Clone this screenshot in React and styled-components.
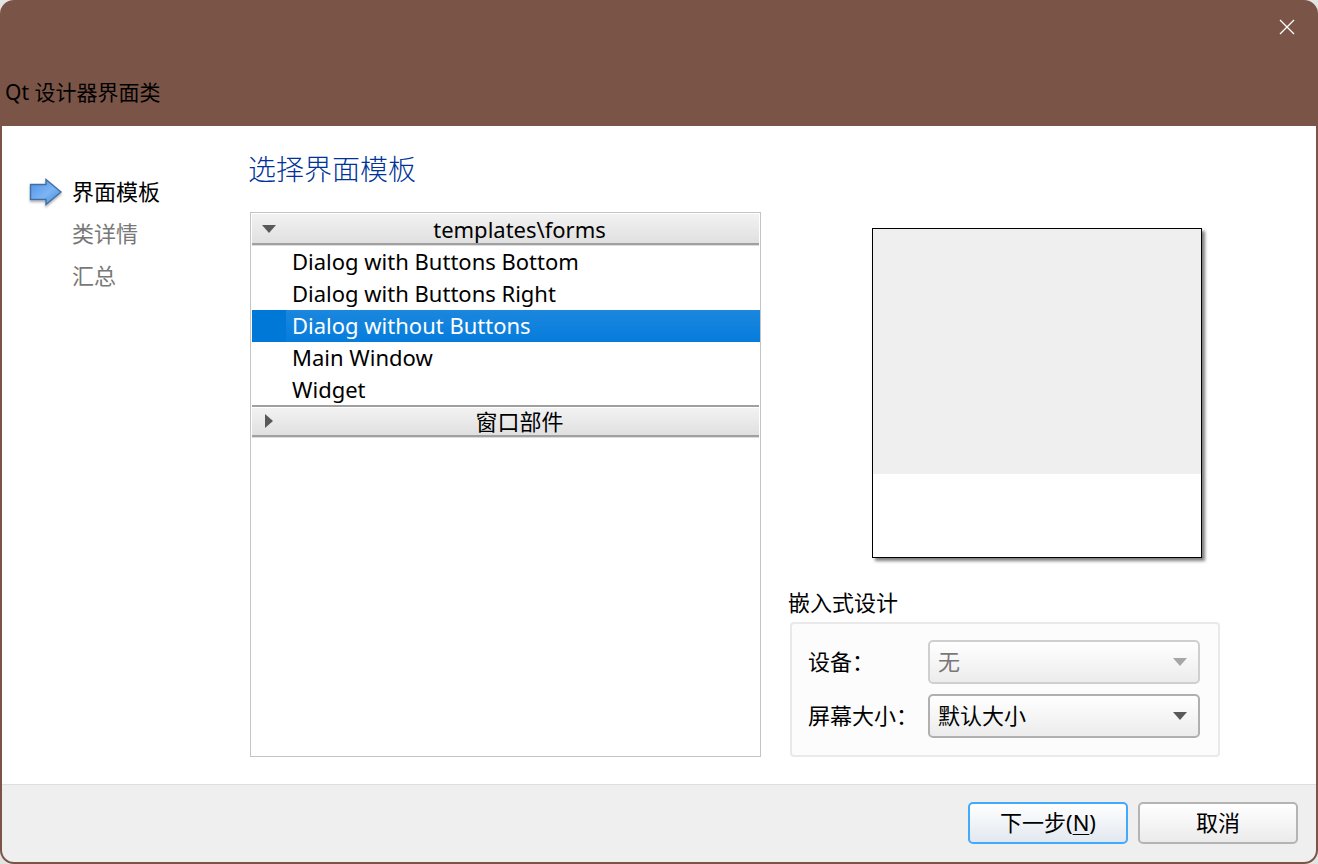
import { useState } from "react";
import styled, { createGlobalStyle } from "styled-components";

const GlobalStyle = createGlobalStyle`
  * {
    box-sizing: border-box;
  }

  body {
    margin: 0;
    background: #e4e4e4;
    color: #000;
    font-family: "Noto Sans", "Noto Sans CJK SC", sans-serif;
    font-size: 22px;
    line-height: 32px;
  }

  button,
  select {
    font: inherit;
    color: inherit;
  }
`;

//Window frame
const Window = styled.div`
  display: flex;
  flex-direction: column;
  min-height: 100vh;
  border: 2px solid #7a5547;
  border-radius: 14px;
  background: #7a5547;
  overflow: hidden;
`;

const Header = styled.header`
  padding-bottom: 18px;
`;

const TitleBar = styled.div`
  display: flex;
  justify-content: flex-end;
  height: 50px;
  margin-bottom: 24px;
`;

const CloseButton = styled.button`
  display: flex;
  align-items: center;
  justify-content: center;
  width: 58px;
  padding: 0;
  border: none;
  background: none;
`;

const WindowTitle = styled.h1`
  margin: 0;
  padding-left: 3px;
  font-size: 21px;
  font-weight: 400;
  line-height: 32px;
`;

const Body = styled.div`
  flex: 1;
  display: flex;
  background: #fff;
`;

//Steps
const Steps = styled.ol`
  width: 248px;
  margin: 0;
  padding: 45px 0 0 26px;
  list-style: none;
  font-family: "Noto Sans CJK SC", sans-serif;
`;

const Step = styled.li`
  display: grid;
  grid-template-columns: 36px 1fr;
  align-items: center;
  column-gap: 8px;
  height: 42px;
  color: ${(props) => (props.$current ? "#000" : "#787878")};
`;

const StepName = styled.span`
  grid-column: 2;
  padding-bottom: 4px;
`;

//Page
const Page = styled.main`
  flex: 1;
  display: flex;
  flex-direction: column;
  padding: 22px 18px 27px 0;
`;

const PageTitle = styled.h2`
  margin: 0 0 24px -2px;
  color: #003399;
  font-family: "Noto Sans CJK SC", sans-serif;
  font-size: 28px;
  font-weight: 300;
  line-height: 40px;
`;

const Columns = styled.div`
  flex: 1;
  display: grid;
  grid-template-columns: 511fr 522fr;
  column-gap: 15px;
`;

const Tree = styled.div`
  border: 1px solid #c4c4c4;
  padding-left: 1px;
`;

const GroupHeader = styled.button`
  display: grid;
  grid-template-columns: 34px 1fr;
  align-items: center;
  width: calc(100% - 1px);
  height: 32px;
  margin-bottom: 1px;
  padding: 1px 6px 0 0;
  border: none;
  border-bottom: 2px solid #a0a0a0;
  background: linear-gradient(#fff 1px, #f2f2f2 1px, #e0e0e0);
  box-shadow: 0 1px #dcdcdc;
  line-height: 28px;

  &:not(:first-child) {
    margin-top: -1px;
    padding-top: 0;
    border-top: 2px solid #a0a0a0;
  }
`;

const Expander = styled.svg`
  justify-self: center;
  transform: ${(props) => (props.$open ? "none" : "rotate(-90deg)")};
`;

const Item = styled.button`
  display: block;
  width: 100%;
  height: 32px;
  padding: 0 0 2px 40px;
  border: none;
  background: ${(props) =>
    props.$selected
      ? "linear-gradient(to right, #0078d7 34px, transparent 34px), linear-gradient(#1b87de, #067cdc)"
      : "#fff"};
  color: ${(props) => (props.$selected ? "#fff" : "#000")};
  line-height: 30px;
  text-align: left;
`;

const Side = styled.div`
  display: flex;
  flex-direction: column;
  justify-content: space-between;
  padding-top: 16px;
`;

const Preview = styled.div`
  align-self: center;
  width: 330px;
  height: 330px;
  border: 1px solid #000;
  background: linear-gradient(#efefef 245px, #fff 245px);
  box-shadow: 3px 3px 3px rgba(0, 0, 0, 0.5);
`;

const Embedded = styled.section`
  width: 444px;
  padding-left: 12px;
  font-family: "Noto Sans CJK SC", sans-serif;
`;

const EmbeddedTitle = styled.h3`
  margin: 0 0 5px;
  font-size: 22px;
  font-weight: 400;
  line-height: 32px;
`;

const Frame = styled.div`
  display: grid;
  row-gap: 10px;
  margin-left: 2px;
  padding: 16px 18px 17px 16px;
  border: 2px solid #e9e9e9;
  border-radius: 4px;
  background: #fcfcfc;
`;

const Field = styled.div`
  display: grid;
  grid-template-columns: 120px 1fr;
  align-items: center;
`;

const Label = styled.label`
  padding-bottom: 4px;
`;

const SelectBox = styled.div`
  display: grid;
  align-items: center;

  & > * {
    grid-area: 1 / 1;
  }
`;

const Select = styled.select`
  appearance: none;
  width: 100%;
  height: 44px;
  padding: 0 40px 4px 8px;
  border: 2px solid #b0b0b0;
  border-radius: 5px;
  background: linear-gradient(#fff, #ececec);

  &:disabled {
    border-color: #cfcfcf;
    color: #787878;
    opacity: 1;
  }
`;

const SelectArrow = styled.svg`
  justify-self: end;
  margin-right: 12px;
  pointer-events: none;
`;

//Footer
const Footer = styled.footer`
  display: flex;
  justify-content: flex-end;
  gap: 10px;
  padding: 17px 18px 18px;
  border-top: 1px solid #dfdfdf;
  background: #efefef;
`;

const Button = styled.button`
  width: 160px;
  height: 42px;
  padding: 0 0 2px;
  border: 2px solid ${(props) => (props.$primary ? "#42a9fb" : "#b4b4b4")};
  border-radius: 5px;
  background: linear-gradient(#fff, ${(props) => (props.$primary ? "#e2e8f0" : "#ebebeb")});
  line-height: 36px;
`;

const Mnemonic = styled.span`
  text-decoration: underline;
  text-decoration-thickness: 1px;
  text-underline-offset: 3px;
`;
//End styled components

const steps = ["界面模板", "类详情", "汇总"];

const forms = [
  "Dialog with Buttons Bottom",
  "Dialog with Buttons Right",
  "Dialog without Buttons",
  "Main Window",
  "Widget",
];

const StepArrow = () => (
  <svg width="36" height="34" viewBox="0 0 36 34" aria-hidden="true">
    <defs>
      <linearGradient id="arrowFill" x1="0" y1="0" x2="1" y2="1">
        <stop offset="0" stopColor="#4a90e6" />
        <stop offset="0.55" stopColor="#7db5f5" />
        <stop offset="1" stopColor="#3f83d8" />
      </linearGradient>
      <filter id="arrowShadow" x="-20%" y="-20%" width="140%" height="150%">
        <feDropShadow dx="0" dy="2" stdDeviation="1" floodOpacity="0.3" />
      </filter>
    </defs>
    <path
      d="M2.5 9.5H18V4.5L33 17 18 29.5V24.5H2.5Z"
      fill="url(#arrowFill)"
      stroke="#41709f"
      strokeWidth="1.4"
      filter="url(#arrowShadow)"
    />
  </svg>
);

const Arrow = ({ as: Tag, color = "#595959", ...rest }) => (
  <Tag width="16" height="16" viewBox="0 0 16 16" aria-hidden="true" {...rest}>
    <path d="M1 4H15L8 12Z" fill={color} />
  </Tag>
);

const App = () => {
  const [selected, setSelected] = useState("Dialog without Buttons");
  const [open, setOpen] = useState(true);

  return (
    <>
      <GlobalStyle />
      <Window>
        <Header>
          <TitleBar>
            <CloseButton type="button" aria-label="关闭">
              <svg width="16" height="16" viewBox="0 0 16 16">
                <path d="M1 1L15 15M15 1L1 15" stroke="#fff" strokeWidth="1.3" />
              </svg>
            </CloseButton>
          </TitleBar>
          <WindowTitle>Qt 设计器界面类</WindowTitle>
        </Header>
        <Body>
          <Steps>
            {steps.map((step, index) => (
              <Step key={step} $current={index === 0}>
                {index === 0 && <StepArrow />}
                <StepName>{step}</StepName>
              </Step>
            ))}
          </Steps>
          <Page>
            <PageTitle>选择界面模板</PageTitle>
            <Columns>
              <Tree>
                <GroupHeader type="button" aria-expanded={open} onClick={() => setOpen(!open)}>
                  <Arrow as={Expander} $open={open} />
                  <span>templates\forms</span>
                </GroupHeader>
                {open &&
                  forms.map((form) => (
                    <Item
                      key={form}
                      type="button"
                      $selected={form === selected}
                      onClick={() => setSelected(form)}
                    >
                      {form}
                    </Item>
                  ))}
                <GroupHeader type="button" aria-expanded={false}>
                  <Arrow as={Expander} />
                  <span>窗口部件</span>
                </GroupHeader>
              </Tree>
              <Side>
                <Preview />
                <Embedded>
                  <EmbeddedTitle>嵌入式设计</EmbeddedTitle>
                  <Frame>
                    <Field>
                      <Label htmlFor="device">设备：</Label>
                      <SelectBox>
                        <Select id="device" disabled>
                          <option>无</option>
                        </Select>
                        <Arrow as={SelectArrow} color="#a6a6a6" />
                      </SelectBox>
                    </Field>
                    <Field>
                      <Label htmlFor="screen">屏幕大小：</Label>
                      <SelectBox>
                        <Select id="screen">
                          <option>默认大小</option>
                        </Select>
                        <Arrow as={SelectArrow} />
                      </SelectBox>
                    </Field>
                  </Frame>
                </Embedded>
              </Side>
            </Columns>
          </Page>
        </Body>
        <Footer>
          <Button type="button" $primary>
            下一步(<Mnemonic>N</Mnemonic>)
          </Button>
          <Button type="button">取消</Button>
        </Footer>
      </Window>
    </>
  );
};

export default App;
